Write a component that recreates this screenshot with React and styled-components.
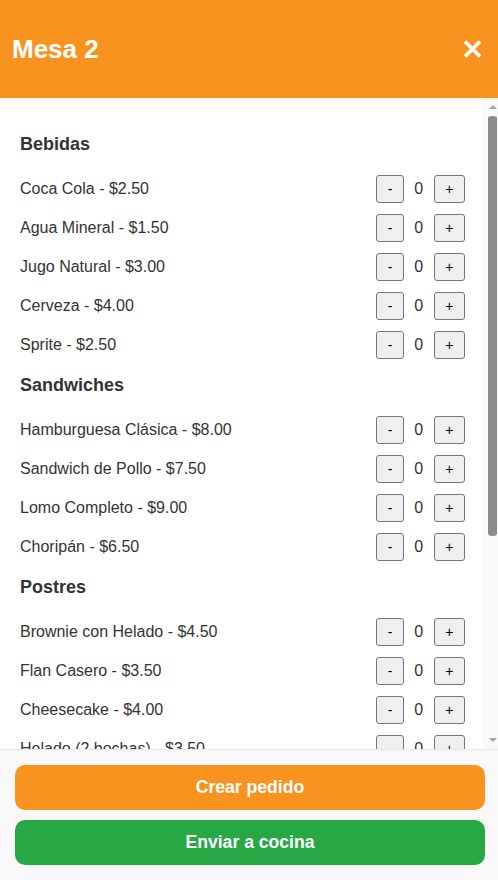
import styled, { createGlobalStyle } from 'styled-components';
import { useState, useRef, useEffect } from 'react';

const menu = [
  {
    name: 'Bebidas',
    items: [
      ['Coca Cola', 2.5],
      ['Agua Mineral', 1.5],
      ['Jugo Natural', 3],
      ['Cerveza', 4],
      ['Sprite', 2.5],
    ],
  },
  {
    name: 'Sandwiches',
    items: [
      ['Hamburguesa Clásica', 8],
      ['Sandwich de Pollo', 7.5],
      ['Lomo Completo', 9],
      ['Choripán', 6.5],
    ],
  },
  {
    name: 'Postres',
    items: [
      ['Brownie con Helado', 4.5],
      ['Flan Casero', 3.5],
      ['Cheesecake', 4],
      ['Helado (2 bochas)', 3.5],
    ],
  },
  {
    name: 'Cafetería',
    items: [
      ['Café', 1.8],
      ['Cortado', 2],
      ['Té', 1.5],
      ['Medialunas', 2.2],
      ['Submarino', 2.8],
      ['Tostado', 4],
    ],
  },
];

const App = () => {
  // cantidades por producto
  const [qty, setQty] = useState({});
  // barra de scroll dibujada a mano
  const [thumb, setThumb] = useState({ top: 0, height: 0 });
  const listRef = useRef(null);
  const trackRef = useRef(null);

  const updateThumb = () => {
    const list = listRef.current;
    const track = trackRef.current;
    if (!list || !track) return;
    const trackH = track.clientHeight;
    setThumb({
      top: (trackH * list.scrollTop) / list.scrollHeight,
      height: (trackH * list.clientHeight) / list.scrollHeight,
    });
  };

  useEffect(() => {
    updateThumb();
    window.addEventListener('resize', updateThumb);
    return () => window.removeEventListener('resize', updateThumb);
  }, []);

  const change = (key, d) => {
    setQty((q) => ({ ...q, [key]: Math.max(0, (q[key] || 0) + d) }));
  };

  return (
    <>
      <GlobalStyle />
      <Modal>
        <Header>
          <Title>Mesa 2</Title>
          <CloseButton aria-label="Cerrar">
            <svg width="19" height="18" viewBox="0 0 19 18">
              <path
                d="M2 1.5 L17 16.5 M17 1.5 L2 16.5"
                stroke="#fff"
                strokeWidth="3.6"
                strokeLinecap="butt"
              />
            </svg>
          </CloseButton>
        </Header>
        <Body>
          <List ref={listRef} onScroll={updateThumb}>
            {menu.map((cat) => (
              <section key={cat.name}>
                <CategoryTitle>{cat.name}</CategoryTitle>
                {cat.items.map(([name, price]) => (
                  <Row key={name}>
                    <ItemName>
                      {name} - ${price.toFixed(2)}
                    </ItemName>
                    <Counter>
                      <QtyButton onClick={() => change(name, -1)}>-</QtyButton>
                      <Qty>{qty[name] || 0}</Qty>
                      <QtyButton onClick={() => change(name, 1)}>+</QtyButton>
                    </Counter>
                  </Row>
                ))}
              </section>
            ))}
          </List>
          <Rail aria-hidden="true">
            <ArrowBox>
              <Arrow dir="up" />
            </ArrowBox>
            <Track ref={trackRef}>
              <Thumb style={{ marginTop: thumb.top, height: thumb.height }} />
            </Track>
            <ArrowBox>
              <Arrow dir="down" />
            </ArrowBox>
          </Rail>
        </Body>
        <Footer>
          <ActionButton color="#f7931e">Crear pedido</ActionButton>
          <ActionButton color="#28a745">Enviar a cocina</ActionButton>
        </Footer>
      </Modal>
    </>
  );
};

const GlobalStyle = createGlobalStyle`
  body {
    margin: 0;
    font-family: "Liberation Sans", Arial, sans-serif;
    background: #fff;
  }
`;

const Modal = styled.div`
  height: 880px;
  display: flex;
  flex-direction: column;
  overflow: hidden;
`;

const Header = styled.header`
  flex: 0 0 98px;
  background: #f7931e;
  display: flex;
  align-items: center;
  justify-content: space-between;
  padding: 0 16px 0 12px;
  box-sizing: border-box;
`;

const Title = styled.h2`
  margin: 0;
  color: #fff;
  font-size: 26px;
  font-weight: bold;
  line-height: 30px;
`;

const CloseButton = styled.button`
  border: none;
  background: none;
  padding: 0;
  width: 19px;
  height: 18px;
  display: flex;
  cursor: pointer;
`;

const Body = styled.div`
  flex: 1;
  min-height: 0;
  display: flex;
`;

const List = styled.div`
  flex: 1;
  overflow-y: auto;
  scrollbar-width: none;
  padding: 25px 18px 2px 20px;

  &::-webkit-scrollbar {
    display: none;
  }
`;

const Rail = styled.div`
  flex: 0 0 15px;
  display: flex;
  flex-direction: column;
  background: #f9f9f9;
`;

const ArrowBox = styled.div`
  flex: 0 0 15px;
  display: flex;
  align-items: center;
  justify-content: center;
  padding-left: 4px;
`;

const Arrow = styled.div`
  width: 0;
  height: 0;
  border-left: 4px solid transparent;
  border-right: 4px solid transparent;
  ${({ dir }) =>
    dir === 'up'
      ? 'border-bottom: 4px solid #a3a3a3; margin-top: 2px;'
      : 'border-top: 4px solid #a3a3a3; margin-bottom: 4px;'}
`;

const Track = styled.div`
  flex: 1;
  display: flex;
  flex-direction: column;
  padding: 0 1px 0 5px;
`;

const Thumb = styled.div`
  flex: 0 0 auto;
  box-sizing: border-box;
  border-top: 3px solid transparent;
  border-bottom: 2px solid transparent;
  background: #8c8c8c;
  background-clip: padding-box;
  border-radius: 7px;
`;

const CategoryTitle = styled.h3`
  margin: 11px 0 14px;
  font-size: 18px;
  line-height: 21px;
  color: #333;
  font-weight: bold;
`;

const Row = styled.div`
  height: 39px;
  display: flex;
  align-items: center;
  justify-content: space-between;
`;

const ItemName = styled.span`
  font-size: 16px;
  color: #333;
`;

const Counter = styled.div`
  display: flex;
  align-items: center;
  gap: 8px;
`;

const QtyButton = styled.button`
  height: 28px;
  padding: 0 10.5px;
  font-family: "Liberation Sans", Arial, sans-serif;
  font-size: 14px;
  color: #000;
  background: #efefef;
  border: 1px solid #767676;
  border-radius: 3px;
  cursor: pointer;
`;

const Qty = styled.span`
  min-width: 14px;
  text-align: center;
  font-size: 16px;
  color: #333;
`;

const Footer = styled.footer`
  flex: 0 0 auto;
  background: #f8f8f8;
  border-top: 1px solid #e6e6e6;
  padding: 15px 13px 15px 15px;
  display: flex;
  flex-direction: column;
  gap: 10px;
`;

const ActionButton = styled.button`
  height: 45px;
  border: none;
  border-radius: 10px;
  background: ${({ color }) => color};
  color: #fff;
  font-family: "Liberation Sans", Arial, sans-serif;
  font-size: 17.6px;
  font-weight: bold;
  cursor: pointer;
`;

export default App;
